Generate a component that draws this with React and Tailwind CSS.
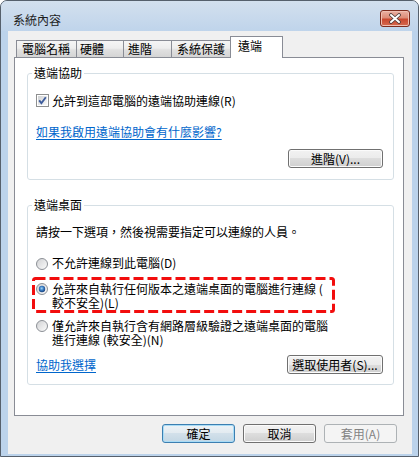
import React from "react";

const tabs = [
  { label: "電腦名稱", w: "w-[61px]", pl: "pl-[5px]" },
  { label: "硬體", w: "w-[48px]", pl: "pl-[3px]" },
  { label: "進階", w: "w-[49px]", pl: "pl-[4px]" },
  { label: "系統保護", w: "w-[60px]", pl: "pl-[5px]" },
];

function Button({ children, variant = "normal", className = "" }) {
  const styles = {
    normal:
      "border-[#707070] text-black bg-[linear-gradient(#f2f2f2_0%,#ebebeb_50%,#dddddd_50%,#cfcfcf_100%)] shadow-[inset_0_0_0_1px_#fbfbfb]",
    default:
      "border-[#3c7fb1] text-black bg-[linear-gradient(#edf3f7_0%,#e2eaf0_50%,#d2e0ea_50%,#c4d7e4_100%)] shadow-[inset_0_0_0_1px_#a9dcf6]",
    disabled: "border-[#adb2b5] text-[#838383] bg-[#f4f4f4]",
  };
  return (
    <div
      className={`h-[19px] flex items-center justify-center border rounded-[3px] leading-[12px] ${styles[variant]} ${className}`}
    >
      {children}
    </div>
  );
}

function Checkbox() {
  return (
    <svg width="13" height="13" viewBox="0 0 13 13" className="shrink-0">
      <defs>
        <linearGradient id="cbg" x1="0" y1="0" x2="1" y2="1">
          <stop offset="0" stopColor="#cfd1d3" />
          <stop offset="1" stopColor="#fbfbfb" />
        </linearGradient>
      </defs>
      <rect x="0.5" y="0.5" width="12" height="12" fill="#fff" stroke="#8e8f8f" />
      <rect x="2" y="2" width="9" height="9" fill="url(#cbg)" />
      <path d="M3.2 6.4 L5.4 9.2 L9.8 3.2" fill="none" stroke="#3d5c9c" strokeWidth="1.9" />
    </svg>
  );
}

function Radio({ checked, id }) {
  return (
    <svg width="12" height="12" viewBox="0 0 12 12" className="shrink-0 mt-[1px]">
      <defs>
        <linearGradient id={`rg${id}`} x1="0" y1="0" x2="1" y2="1">
          <stop offset="0" stopColor="#cfd0d2" />
          <stop offset="1" stopColor="#fdfdfd" />
        </linearGradient>
        <radialGradient id={`rd${id}`} cx="0.45" cy="0.4" r="0.6">
          <stop offset="0" stopColor="#a6d8f6" />
          <stop offset="0.5" stopColor="#3b7ec4" />
          <stop offset="1" stopColor="#173f7c" />
        </radialGradient>
      </defs>
      <circle cx="6" cy="6" r="5.5" fill={`url(#rg${id})`} stroke="#8c9096" />
      {checked && <circle cx="6" cy="6" r="3.2" fill={`url(#rd${id})`} />}
    </svg>
  );
}

function GroupBox({ title, className = "", children }) {
  return (
    <fieldset className={`w-[367px] border border-[#d5dfe5] rounded-[3px] ${className}`}>
      <legend className="ml-[4px] px-[2px] leading-[12px]">{title}</legend>
      <div className="pl-[8px]">{children}</div>
    </fieldset>
  );
}

export default function App() {
  return (
    <div className="w-[420px] h-[457px] bg-white font-['Noto_Sans_CJK_TC','Liberation_Sans',sans-serif] text-[12px] leading-[12px] text-black">
      <div className="w-[419px] h-[457px] border border-[#56606c] rounded-t-[7px] bg-[#bcd3eb] flex flex-col overflow-hidden">
        {/* title bar */}
        <div className="h-[30px] shrink-0 flex justify-between items-start pl-[12px] pr-[8px] bg-gradient-to-b from-[#d3e0ee] to-[#bfd4eb]">
          <span className="mt-[13px] text-[#1e1e1e]">系統內容</span>
          <div className="mt-[9px] w-[30px] h-[17px] rounded-[3px] border border-[#7d2c1e] bg-[linear-gradient(#eab1a3_0%,#dd8c77_45%,#c9482f_55%,#d66a4f_100%)] flex items-center justify-center shadow-[inset_0_0_0_1px_#f0bfb2]">
            <svg width="14" height="11" viewBox="0 0 14 11">
              <path d="M3 2 L11 9 M11 2 L3 9" stroke="#4a3a38" strokeWidth="3.6" strokeLinecap="round" />
              <path d="M3 2 L11 9 M11 2 L3 9" stroke="#ffffff" strokeWidth="2" strokeLinecap="round" />
            </svg>
          </div>
        </div>

        {/* client area */}
        <div className="ml-[7px] mr-[6px] h-[423px] shrink-0 bg-[#f0f0f0] pl-[6px] pr-[8px] pt-[5px]">
          {/* tabs */}
          <div className="relative z-10 h-[21px] flex items-end pl-[2px]">
            {tabs.map((t, i) => (
              <div
                key={t.label}
                className={`${t.w} ${t.pl} ${i > 0 ? "-ml-px" : ""} h-[17px] border border-b-0 border-[#898c95] flex items-center bg-[linear-gradient(#f5f5f5_0%,#ededed_45%,#e0e0e0_55%,#d5d5d5_100%)]`}
              >
                {t.label}
              </div>
            ))}
            <div className="-ml-px w-[53px] h-[22px] -mb-px border border-b-0 border-[#898c95] bg-white pl-[7px] pt-[3px]">
              遠端
            </div>
          </div>

          {/* panel */}
          <div className="w-[390px] h-[359px] border border-[#898c95] bg-white pl-[12px] pt-[9px]">
            <GroupBox title="遠端協助">
              <div className="mt-[15px] h-[13px] flex items-center gap-[3px]">
                <Checkbox />
                <span>允許到這部電腦的遠端協助連線(R)</span>
              </div>
              <div className="mt-[19px]">
                <span className="text-[#0066cc] underline underline-offset-2">如果我啟用遠端協助會有什麼影響?</span>
              </div>
              <div className="mt-[11px] pb-[11px] flex justify-end pr-[10px]">
                <Button className="w-[95px]">進階(V)...</Button>
              </div>
            </GroupBox>

            <GroupBox title="遠端桌面" className="mt-[19px]">
              <div className="mt-[15px]">請按一下選項，然後視需要指定可以連線的人員。</div>
              <div className="mt-[18px] h-[14px] flex items-center gap-[4px]">
                <Radio id="1" />
                <span>不允許連線到此電腦(D)</span>
              </div>
              <div className="relative mt-[12px] flex items-start gap-[4px]">
                <Radio id="2" checked />
                <span className="whitespace-nowrap leading-[14px]">
                  允許來自執行任何版本之遠端桌面的電腦進行連線 (
                  <br />
                  較不安全)(L)
                </span>
                <svg width="303" height="36" className="absolute left-[-4px] top-[-5px]">
                  <rect
                    x="1.5"
                    y="1.5"
                    width="300"
                    height="33"
                    rx="2"
                    fill="none"
                    stroke="#f20d0d"
                    strokeWidth="3"
                    strokeDasharray="10 4"
                  />
                </svg>
              </div>
              <div className="mt-[9px] flex items-start gap-[4px]">
                <Radio id="3" />
                <span className="whitespace-nowrap leading-[14px]">
                  僅允許來自執行含有網路層級驗證之遠端桌面的電腦
                  <br />
                  進行連線 (較安全)(N)
                </span>
              </div>
              <div className="mt-[8px] pb-[10px] pr-[10px] flex items-center justify-between">
                <span className="text-[#0066cc] underline underline-offset-2">協助我選擇</span>
                <Button className="w-[96px]">選取使用者(S)...</Button>
              </div>
            </GroupBox>
          </div>

          {/* dialog buttons */}
          <div className="mt-[8px] flex justify-end gap-[8px] pr-[7px]">
            <Button variant="default" className="w-[73px]">確定</Button>
            <Button className="w-[73px]">取消</Button>
            <Button variant="disabled" className="w-[73px]">套用(A)</Button>
          </div>
        </div>
      </div>
    </div>
  );
}
